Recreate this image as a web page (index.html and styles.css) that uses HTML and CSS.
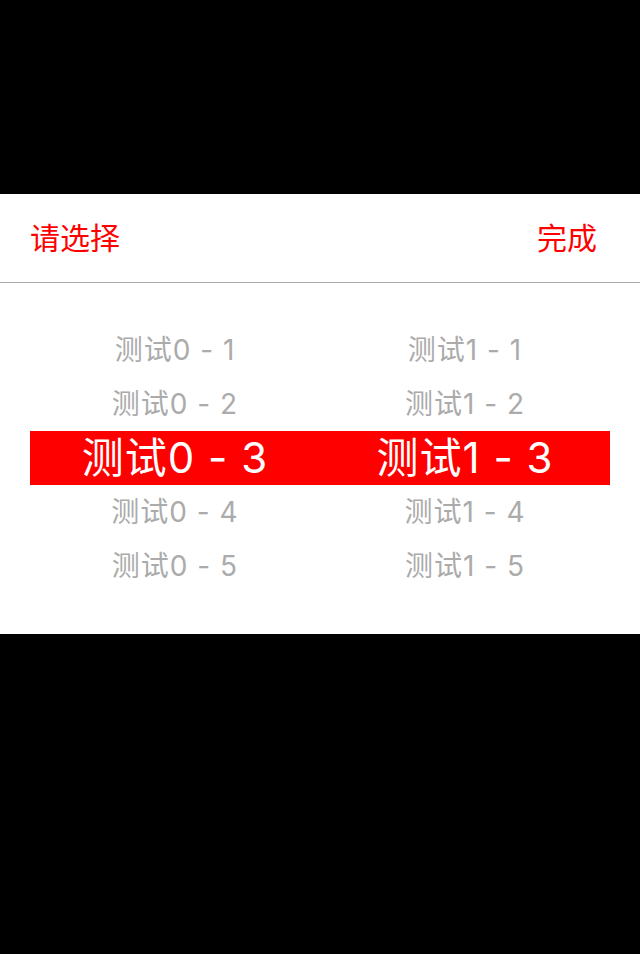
FILE: index.html
```html
<!DOCTYPE html>
<html lang="zh">
<head>
<meta charset="utf-8">
<link rel="stylesheet" href="styles.css">
</head>
<body>
<div class="sheet">
  <div class="toolbar">
    <span class="btn">请选择</span>
    <span class="btn">完成</span>
  </div>
  <div class="picker">
    <div class="row"><span>测试0 - 1</span><span>测试1 - 1</span></div>
    <div class="row"><span>测试0 - 2</span><span>测试1 - 2</span></div>
    <div class="row selected"><span>测试0 - 3</span><span>测试1 - 3</span></div>
    <div class="row"><span>测试0 - 4</span><span>测试1 - 4</span></div>
    <div class="row"><span>测试0 - 5</span><span>测试1 - 5</span></div>
  </div>
</div>
</body>
</html>
```
FILE: styles.css
```css
html, body {
  margin: 0;
  padding: 0;
  background: #000;
  height: 954px;
  overflow: hidden;
}
body {
  font-family: Inter, "Noto Sans CJK SC", sans-serif;
}
.sheet {
  margin-top: 194px;
  background: #fff;
  height: 440px;
}
.toolbar {
  border-bottom: 1px solid #aaaaaa;
  display: flex;
  align-items: center;
  justify-content: space-between;
  padding: 0 43px 4px 30px;
  box-sizing: border-box;
  height: 89px;
}
.btn {
  color: #ff0000;
  font-size: 30px;
  line-height: 1;
  font-family: "Noto Sans CJK SC", sans-serif;
}
.picker {
  padding: 40px 30px 0;
}
.row {
  height: 54px;
  display: grid;
  grid-template-columns: 1fr 1fr;
  align-items: center;
  justify-items: center;
  color: #ababab;
  font-size: 28px;
  letter-spacing: 1px;
}
.row span {
  line-height: 1;
}
.row.selected {
  background: #ff0000;
  color: #fff;
  font-size: 42px;
  letter-spacing: 1px;
}
```
